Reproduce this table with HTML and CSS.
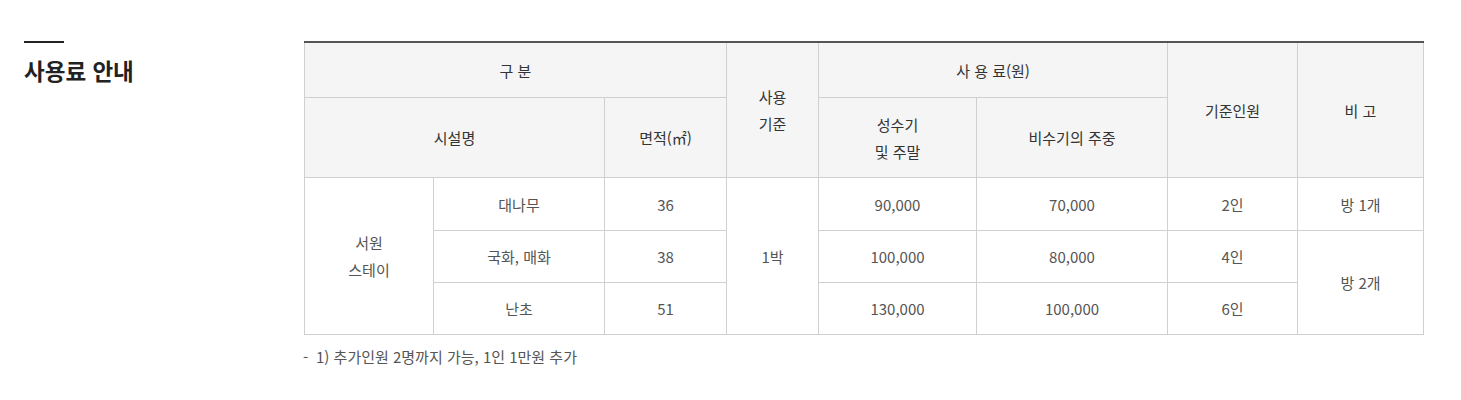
FILE: index.html
```html
<!DOCTYPE html>
<html lang="ko">
<head>
<meta charset="utf-8">
<link rel="stylesheet" href="styles.css">
</head>
<body>
<div class="page">
  <div class="side">
    <h2 class="title">사용료 안내</h2>
  </div>
  <div class="content">
    <table class="fee">
      <colgroup>
        <col class="c1"><col class="c2"><col class="c3"><col class="c4"><col class="c5"><col class="c6"><col class="c7"><col class="c8">
      </colgroup>
      <thead>
        <tr class="h1">
          <th colspan="3">구 분</th>
          <th rowspan="2">사용<br>기준</th>
          <th colspan="2">사 용 료(원)</th>
          <th rowspan="2">기준인원</th>
          <th rowspan="2">비 고</th>
        </tr>
        <tr class="h2">
          <th colspan="2">시설명</th>
          <th>면적(㎡)</th>
          <th>성수기<br>및 주말</th>
          <th>비수기의 주중</th>
        </tr>
      </thead>
      <tbody>
        <tr class="first">
          <td rowspan="3">서원<br>스테이</td>
          <td>대나무</td>
          <td>36</td>
          <td rowspan="3">1박</td>
          <td>90,000</td>
          <td>70,000</td>
          <td>2인</td>
          <td>방 1개</td>
        </tr>
        <tr>
          <td>국화, 매화</td>
          <td>38</td>
          <td>100,000</td>
          <td>80,000</td>
          <td>4인</td>
          <td rowspan="2">방 2개</td>
        </tr>
        <tr>
          <td>난초</td>
          <td>51</td>
          <td>130,000</td>
          <td>100,000</td>
          <td>6인</td>
        </tr>
      </tbody>
    </table>
    <p class="note"><span class="dash">-</span>1) 추가인원 2명까지 가능, 1인 1만원 추가</p>
  </div>
</div>
</body>
</html>
```

FILE: styles.css
```css
html, body {
  margin: 0;
  padding: 0;
  background: #fff;
}
body {
  font-family: "Noto Sans CJK KR", "Noto Sans", sans-serif;
  color: #333;
}
.page {
  display: flex;
  padding-top: 41px;
}
.side {
  width: 280px;
  padding-left: 24px;
  flex: none;
}
.side::before {
  content: "";
  display: block;
  width: 40px;
  height: 2px;
  background: #222;
}
.title {
  margin: 0;
  padding-top: 11px;
  font-size: 22.5px;
  line-height: 32px;
  font-weight: 700;
  color: #222;
  letter-spacing: 0;
}
.content {
  width: 1119px;
  flex: none;
}
.fee {
  width: 1119px;
  border-collapse: collapse;
  table-layout: fixed;
  border-top: 2px solid #555;
}
.c1 { width: 129px; }
.c2 { width: 171px; }
.c3 { width: 122px; }
.c4 { width: 92px; }
.c5 { width: 158px; }
.c6 { width: 191px; }
.c7 { width: 130px; }
.c8 { width: 126px; }
.fee th, .fee td {
  border: 1px solid #d0d0d0;
  text-align: center;
  vertical-align: middle;
  font-size: 15px;
  line-height: 27px;
  padding: 0;
}
.fee th {
  background: #f5f5f5;
  font-weight: 400;
  color: #333;
}
.fee td {
  color: #555;
  font-weight: 400;
}
.fee tr.h1 th { height: 54px; }
.fee tr.h2 th { height: 79px; }
.fee tbody td { height: 51px; }
.fee tbody tr.first td { height: 52px; }
.fee thead tr.h1 th { border-top: none; }
.note {
  margin: 11px 0 0 -1px;
  font-size: 15px;
  line-height: 22px;
  color: #555;
}
.dash {
  display: inline-block;
  width: 13px;
}
```
